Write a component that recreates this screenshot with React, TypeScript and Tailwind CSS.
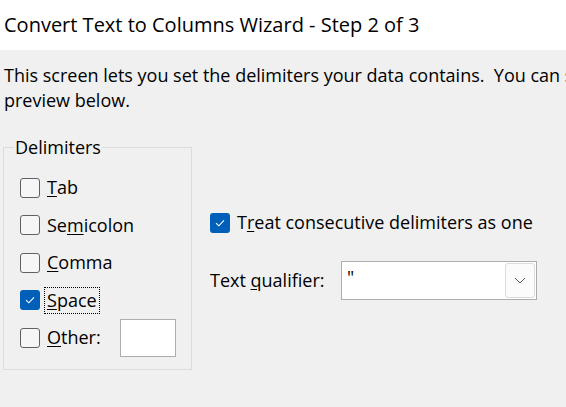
import { ReactNode } from "react";

const font = { fontFamily: '"Open Sans", "Noto Sans", sans-serif' };

function Check({ checked }: { checked?: boolean }) {
    if (checked) {
        return <div className="w-[20px] h-[20px] rounded-[3px] bg-[#005fb8] flex items-center justify-center shrink-0">
            <svg width="12" height="10" viewBox="0 0 12 10">
                <path d="M2 5.2 L4.8 7.8 L10 2.4" fill="none" stroke="white" strokeWidth="1.1" />
            </svg>
        </div>
    }
    return <div className="w-[20px] h-[20px] rounded-[3px] border border-[#616161] bg-[#f6f6f6] shrink-0" />
}

function Row({ checked, children, focus }: { checked?: boolean, children: ReactNode, focus?: boolean }) {
    return <div className="h-[37.5px] flex items-center">
        <Check checked={checked} />
        <div className={`ml-[5px] px-[2px] leading-[25px] ${focus ? "outline outline-1 outline-dotted outline-black" : ""}`}>
            {children}
        </div>
    </div>
}

export default function App() {
    return <div className="w-[566px] h-[407px] bg-[#f0f0f0] overflow-hidden text-[18px] text-black" style={font}>
        <div className="h-[50px] bg-white flex items-center px-[4px] text-[20px] whitespace-nowrap">
            Convert Text to Columns Wizard - Step 2 of 3
        </div>
        <div className="pt-[13px] px-[4px] leading-[25px] whitespace-nowrap">
            <div>This screen lets you set the delimiters your data contains.&nbsp; You can see how your text is affected in the</div>
            <div>preview below.</div>
        </div>
        <div className="flex mt-[22px]">
            <fieldset className="ml-[3px] w-[189px] h-[235px] border border-[#dcdcdc] px-[16px] pb-0">
                <legend className="ml-[-6px] px-[1px] leading-[24px]">Delimiters</legend>
                <div className="mt-[10px]">
                    <Row><span className="underline underline-offset-2">T</span>ab</Row>
                    <Row>Se<span className="underline underline-offset-2">m</span>icolon</Row>
                    <Row><span className="underline underline-offset-2">C</span>omma</Row>
                    <Row checked focus><span className="underline underline-offset-2">S</span>pace</Row>
                    <div className="h-[37.5px] flex items-center">
                        <Check />
                        <div className="ml-[7px] leading-[25px]"><span className="underline underline-offset-2">O</span>ther:</div>
                        <div className="ml-auto mr-[-1px] w-[56px] h-[38px] bg-white border border-[#adadad]" />
                    </div>
                </div>
            </fieldset>
            <div className="ml-[18px] pt-[75px]">
                <div className="flex items-center">
                    <Check checked />
                    <div className="ml-[7px] leading-[25px]">T<span className="underline underline-offset-2">r</span>eat consecutive delimiters as one</div>
                </div>
                <div className="flex items-center mt-[26px]">
                    <div className="w-[131px] leading-[25px]">Text <span className="underline underline-offset-2">q</span>ualifier:</div>
                    <div className="w-[196px] h-[39px] bg-white border border-[#adadad] flex items-center pl-[5px] pr-[1px]">
                        <div className="flex-1 leading-[25px] -mt-[6px]">"</div>
                        <div className="w-[30px] h-[35px] bg-[#fbfbfb] border border-[#dcdcdc] rounded-[3px] flex items-center justify-center">
                            <svg width="12" height="7" viewBox="0 0 12 7">
                                <path d="M1 1 L6 6 L11 1" fill="none" stroke="#555" strokeWidth="1" />
                            </svg>
                        </div>
                    </div>
                </div>
            </div>
        </div>
    </div>
}
